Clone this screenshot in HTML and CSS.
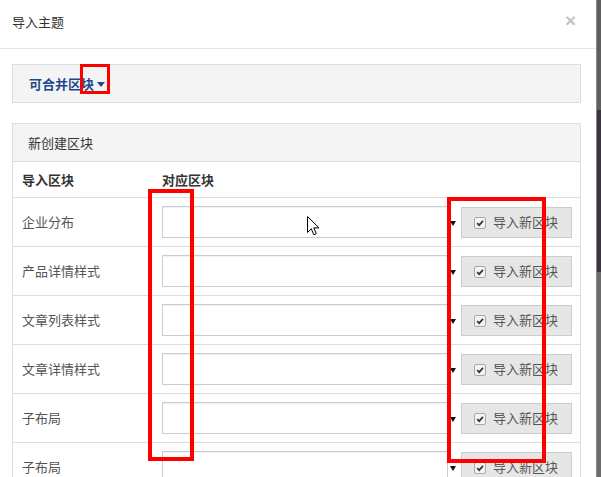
FILE: index.html
```html
<!DOCTYPE html>
<html lang="zh-CN">
<head>
<meta charset="utf-8">
<title>导入主题</title>
<link rel="stylesheet" href="styles.css">
</head>
<body>
<div class="screen">
  <div class="modal">
    <div class="modal-header">
      <h4 class="modal-title">导入主题</h4>
      <span class="close">×</span>
    </div>
    <div class="modal-body">
      <div class="panel merge">
        <span class="merge-title">可合并区块</span><span class="caret"></span>
      </div>
      <div class="panel">
        <div class="panel-heading">新创建区块</div>
        <div class="row head">
          <div class="c-label">导入区块</div>
          <div class="c-target">对应区块</div>
        </div>
        <div class="row">
          <div class="c-label">企业分布</div>
          <div class="select"></div><span class="arrow"></span>
          <div class="btn"><span class="check"><svg viewBox="0 0 12 12" width="12" height="12"><path d="M2.6 6.2 L5 8.6 L9.6 3.4" fill="none" stroke="#333" stroke-width="2"/></svg></span>导入新区块</div>
        </div>
        <div class="row">
          <div class="c-label">产品详情样式</div>
          <div class="select"></div><span class="arrow"></span>
          <div class="btn"><span class="check"><svg viewBox="0 0 12 12" width="12" height="12"><path d="M2.6 6.2 L5 8.6 L9.6 3.4" fill="none" stroke="#333" stroke-width="2"/></svg></span>导入新区块</div>
        </div>
        <div class="row">
          <div class="c-label">文章列表样式</div>
          <div class="select"></div><span class="arrow"></span>
          <div class="btn"><span class="check"><svg viewBox="0 0 12 12" width="12" height="12"><path d="M2.6 6.2 L5 8.6 L9.6 3.4" fill="none" stroke="#333" stroke-width="2"/></svg></span>导入新区块</div>
        </div>
        <div class="row">
          <div class="c-label">文章详情样式</div>
          <div class="select"></div><span class="arrow"></span>
          <div class="btn"><span class="check"><svg viewBox="0 0 12 12" width="12" height="12"><path d="M2.6 6.2 L5 8.6 L9.6 3.4" fill="none" stroke="#333" stroke-width="2"/></svg></span>导入新区块</div>
        </div>
        <div class="row">
          <div class="c-label">子布局</div>
          <div class="select"></div><span class="arrow"></span>
          <div class="btn"><span class="check"><svg viewBox="0 0 12 12" width="12" height="12"><path d="M2.6 6.2 L5 8.6 L9.6 3.4" fill="none" stroke="#333" stroke-width="2"/></svg></span>导入新区块</div>
        </div>
        <div class="row">
          <div class="c-label">子布局</div>
          <div class="select"></div><span class="arrow"></span>
          <div class="btn"><span class="check"><svg viewBox="0 0 12 12" width="12" height="12"><path d="M2.6 6.2 L5 8.6 L9.6 3.4" fill="none" stroke="#333" stroke-width="2"/></svg></span>导入新区块</div>
        </div>
      </div>
    </div>
  </div>
  <div class="strip">
    <div class="strip-a"></div>
    <div class="strip-b"></div>
    <div class="strip-c"></div>
  </div>

  <div class="mark mark-caret"></div>
  <div class="mark mark-left"></div>
  <div class="mark mark-right"></div>
  <svg class="cursor" width="14" height="21" viewBox="0 0 14 21">
    <path d="M0.5 0.5 L0.5 16.5 L4.3 12.8 L6.8 18.8 L9.3 17.7 L6.8 11.9 L12 11.9 Z" fill="#fff" stroke="#000" stroke-width="1" stroke-linejoin="miter"/>
  </svg>
</div>
</body>
</html>
```

FILE: styles.css
```css
* { box-sizing: border-box; }
html, body {
  margin: 0;
  padding: 0;
  width: 601px;
  height: 477px;
  overflow: hidden;
  background: #fff;
}
body {
  font-family: "Noto Sans CJK SC", "Liberation Sans", sans-serif;
  font-size: 13px;
  color: #333;
}
.screen {
  position: relative;
  display: flex;
  width: 601px;
  height: 477px;
  overflow: hidden;
}
.modal {
  width: 596px;
  flex: none;
  background: #fff;
}
.modal-header {
  height: 49px;
  border-bottom: 1px solid #e5e5e5;
  display: flex;
  align-items: center;
  justify-content: space-between;
  padding: 0 20px 4px 12px;
}
.modal-title {
  margin: 0;
  font-size: 13px;
  font-weight: normal;
  line-height: 18px;
  color: #333;
}
.close {
  font-family: "Liberation Sans", sans-serif;
  font-size: 19px;
  font-weight: bold;
  color: #c4c4c4;
  line-height: 18px;
  margin-top: -2px;
}
.modal-body {
  padding: 15px 15px 0 12px;
}
.panel {
  border: 1px solid #ddd;
  background: #fff;
}
.merge {
  height: 39px;
  background: #f4f4f4;
  display: flex;
  align-items: center;
  padding-left: 16px;
  margin-bottom: 20px;
}
.merge-title {
  color: #1d4a8c;
  font-weight: bold;
  font-size: 13px;
  line-height: 18px;
}
.caret {
  width: 0;
  height: 0;
  border-left: 4px solid transparent;
  border-right: 4px solid transparent;
  border-top: 5px solid #1d4a8c;
  margin-left: 3px;
  margin-top: 1px;
}
.panel-heading {
  height: 38px;
  background: #f4f4f4;
  border-bottom: 1px solid #ddd;
  display: flex;
  align-items: center;
  padding-left: 15px;
  color: #333;
  line-height: 18px;
}
.row {
  display: flex;
  align-items: center;
  height: 49px;
  padding: 0 7px 0 9px;
  border-top: 1px solid #ddd;
  color: #555;
}
.row.head {
  height: 35px;
  border-top: none;
  font-weight: bold;
  color: #333;
}
.c-label {
  width: 140px;
  flex: none;
  line-height: 18px;
}
.c-target {
  line-height: 18px;
}
.select {
  width: 286px;
  height: 32px;
  flex: none;
  border: 1px solid #ccc;
  background: #fff;
  box-shadow: inset 0 1px 1px rgba(0,0,0,0.06);
}
.arrow {
  width: 0;
  height: 0;
  flex: none;
  border-left: 3px solid transparent;
  border-right: 3px solid transparent;
  border-top: 5px solid #111;
  margin-left: 2px;
  margin-top: 2px;
}
.btn {
  width: 111px;
  height: 31px;
  flex: none;
  margin-left: 5px;
  background: #e6e6e6;
  border: 1px solid #ccc;
  display: flex;
  align-items: center;
  padding-left: 12px;
  color: #555;
  line-height: 18px;
}
.check {
  width: 12px;
  height: 12px;
  border: 1px solid #a9a9a9;
  border-radius: 2px;
  background: #f3f3f3;
  display: flex;
  align-items: center;
  justify-content: center;
  margin-right: 7px;
  margin-top: 1px;
}
.check svg { display: block; width: 10px; height: 10px; }
.strip {
  flex: 1;
  display: flex;
  flex-direction: column;
  border-left: 1px solid #8a8a8a;
}
.strip-a { height: 110px; background: #5f5f60; }
.strip-b { height: 162px; background: #3a3340; }
.strip-c { flex: 1; background: #6c6c6c; }
.mark {
  position: absolute;
  border: 4px solid #ff0000;
}
.mark-caret { left: 80px; top: 64px; width: 30px; height: 30px; border-width: 3px; }
.mark-left { left: 148px; top: 189px; width: 46px; height: 272px; }
.mark-right { left: 447px; top: 197px; width: 99px; height: 266px; }
.cursor {
  position: absolute;
  left: 307px;
  top: 216px;
}
```
